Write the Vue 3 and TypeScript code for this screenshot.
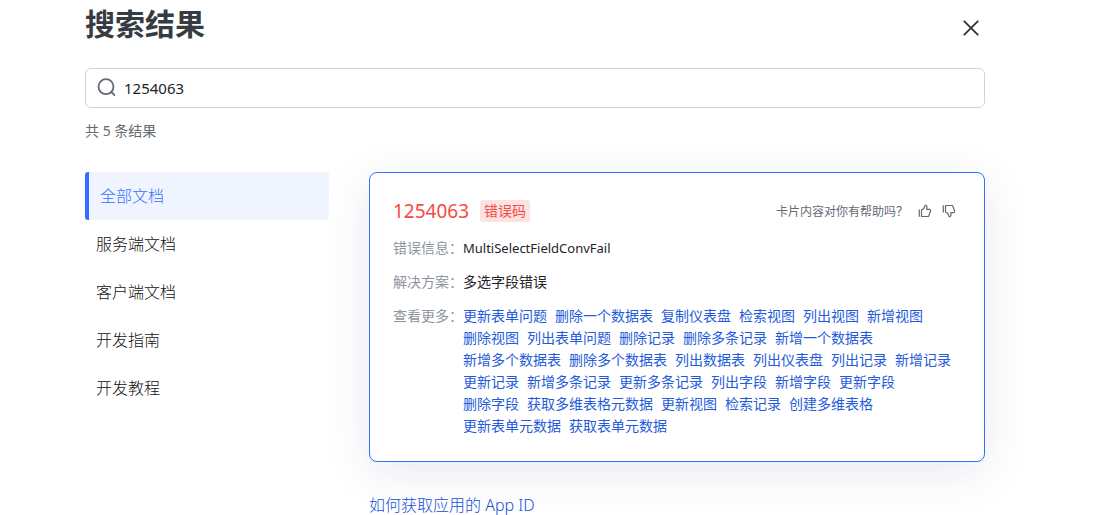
<script setup lang="ts">
import { ref } from 'vue'

const query = ref('1254063')
const categories: string[] = ['全部文档', '服务端文档', '客户端文档', '开发指南', '开发教程']
const active = ref(0)
const related: string[] = [
  '更新表单问题', '删除一个数据表', '复制仪表盘', '检索视图', '列出视图', '新增视图',
  '删除视图', '列出表单问题', '删除记录', '删除多条记录', '新增一个数据表',
  '新增多个数据表', '删除多个数据表', '列出数据表', '列出仪表盘', '列出记录', '新增记录',
  '更新记录', '新增多条记录', '更新多条记录', '列出字段', '新增字段', '更新字段',
  '删除字段', '获取多维表格元数据', '更新视图', '检索记录', '创建多维表格',
  '更新表单元数据', '获取表单元数据',
]
</script>

<template>
  <main class="page">
    <header class="header">
      <h1>搜索结果</h1>
      <button class="icon-button close" type="button" aria-label="关闭">
        <svg width="16" height="16" viewBox="0 0 16 16" fill="none" stroke="#2b2f36" stroke-width="1.7">
          <path d="M.8.8 15.200 15.200M15.200.8.8 15.200" />
        </svg>
      </button>
    </header>

    <label class="search">
      <svg width="20" height="20" viewBox="0 0 20 20" fill="none" stroke="#646a73" stroke-width="1.8">
        <circle cx="9" cy="8.700" r="7.500" />
        <path d="m14.300 14 3.700 3.700" />
      </svg>
      <input v-model="query" type="text" aria-label="搜索" />
    </label>
    <p class="count">共 5 条结果</p>

    <div class="content">
      <nav class="nav">
        <button
          v-for="(name, i) in categories"
          :key="name"
          type="button"
          :class="['nav-item', { active: i === active }]"
          @click="active = i"
        >{{ name }}</button>
      </nav>

      <section class="results">
        <article class="card">
          <div class="card-head">
            <h2>1254063</h2>
            <span class="tag">错误码</span>
            <div class="feedback">
              <span>卡片内容对你有帮助吗？</span>
              <button class="icon-button" type="button" aria-label="有帮助">
                <svg width="14" height="14" viewBox="0 0 14 14" fill="none" stroke="#646a73" stroke-width="1.200" stroke-linejoin="round">
                  <path d="M1.300 5.500v7.200M3.500 6v6.500h7l2.200-5.500-.8-1.700H8.800l.2-2.700-1.100-1.400-.9.300-1.200 3z" />
                </svg>
              </button>
              <button class="icon-button" type="button" aria-label="没有帮助">
                <svg width="14" height="14" viewBox="0 0 14 14" fill="none" stroke="#646a73" stroke-width="1.200" stroke-linejoin="round">
                  <path d="M1.300 1.300v7.200M3.500 8V1.500h7l2.200 5.500-.8 1.700H8.800l.2 2.700-1.100 1.400-.9-.3-1.200-3z" />
                </svg>
              </button>
            </div>
          </div>
          <dl class="details">
            <dt>错误信息：</dt>
            <dd class="message">MultiSelectFieldConvFail</dd>
            <dt>解决方案：</dt>
            <dd>多选字段错误</dd>
            <dt>查看更多：</dt>
            <dd class="links"><a v-for="item in related" :key="item" href="#">{{ item }}</a></dd>
          </dl>
        </article>
        <a class="result-link" href="#">如何获取应用的 App ID</a>
      </section>
    </div>
  </main>
</template>

<style>
body {
  margin: 0;
  background: #fff;
}
</style>

<style scoped>
.page {
  box-sizing: border-box;
  max-width: 1120px;
  height: 100vh;
  overflow: hidden;
  padding: 0 135px 0 85px;
  color: #1f2329;
  font-family: "Noto Sans", "Noto Sans CJK SC", sans-serif;
  font-size: 14px;
}
.header {
  display: flex;
  justify-content: space-between;
  align-items: center;
  height: 56px;
}
h1 {
  margin: 0 0 8px;
  font-size: 30px;
  line-height: 48px;
  color: #373c43;
}
button {
  font: inherit;
  color: inherit;
  border: 0;
  background: none;
  cursor: pointer;
}
.icon-button {
  display: flex;
  padding: 0;
}
.close {
  margin-right: 6px;
}
.search {
  display: flex;
  align-items: center;
  gap: 7px;
  box-sizing: border-box;
  height: 40px;
  margin-top: 12px;
  padding: 0 11px;
  border: 1px solid #d0d3d6;
  border-radius: 6px;
}
input {
  flex: 1;
  min-width: 0;
  padding: 0;
  border: 0;
  outline: 0;
  color: inherit;
  font: inherit;
  font-size: 15px;
}
.count {
  margin: 12px 0 0;
  line-height: 22px;
  color: #646a73;
}
.content {
  display: flex;
  gap: 40px;
  margin-top: 30px;
}
.nav {
  flex: 0 0 244px;
}
.nav-item {
  display: block;
  width: 100%;
  height: 48px;
  padding: 0 11px 2px;
  text-align: left;
  font-size: 16px;
  font-weight: 300;
  color: #0f1217;
}
.nav-item.active {
  border-left: 4px solid #3370ff;
  border-radius: 3px;
  background: #f0f4ff;
  color: #3370ff;
}
.results {
  flex: 1;
  min-width: 0;
}
.card {
  box-sizing: border-box;
  padding: 24px 23px;
  border: 1px solid #3370ff;
  border-radius: 8px;
  background: #fff;
  box-shadow: 0 10px 48px rgba(31, 50, 110, 0.1);
}
.card-head {
  display: flex;
  align-items: center;
  height: 28px;
}
h2 {
  margin: 0 11px 0 0;
  font-size: 19px;
  font-weight: 400;
  color: #f54a45;
}
.tag {
  padding: 0 4px;
  border-radius: 3px;
  background: #fde2e2;
  color: #f54a45;
  line-height: 22px;
}
.feedback {
  display: flex;
  align-items: center;
  gap: 10px;
  margin-left: auto;
  margin-right: 5px;
  color: #646a73;
  font-size: 12px;
}
.details {
  display: grid;
  grid-template-columns: 70px 1fr;
  row-gap: 12px;
  margin: 12px 0 0;
  line-height: 22px;
}
dt {
  white-space: nowrap;
  color: #8f959e;
}
dd {
  margin: 0;
}
.message {
  font-size: 13px;
}
.links {
  display: flex;
  flex-wrap: wrap;
  column-gap: 8px;
  padding-right: 8px;
}
a {
  color: #245bdb;
  text-decoration: none;
}
.result-link {
  display: block;
  margin-top: 31px;
  font-size: 16px;
  font-weight: 300;
  line-height: 24px;
  color: #1450d8;
}
</style>
